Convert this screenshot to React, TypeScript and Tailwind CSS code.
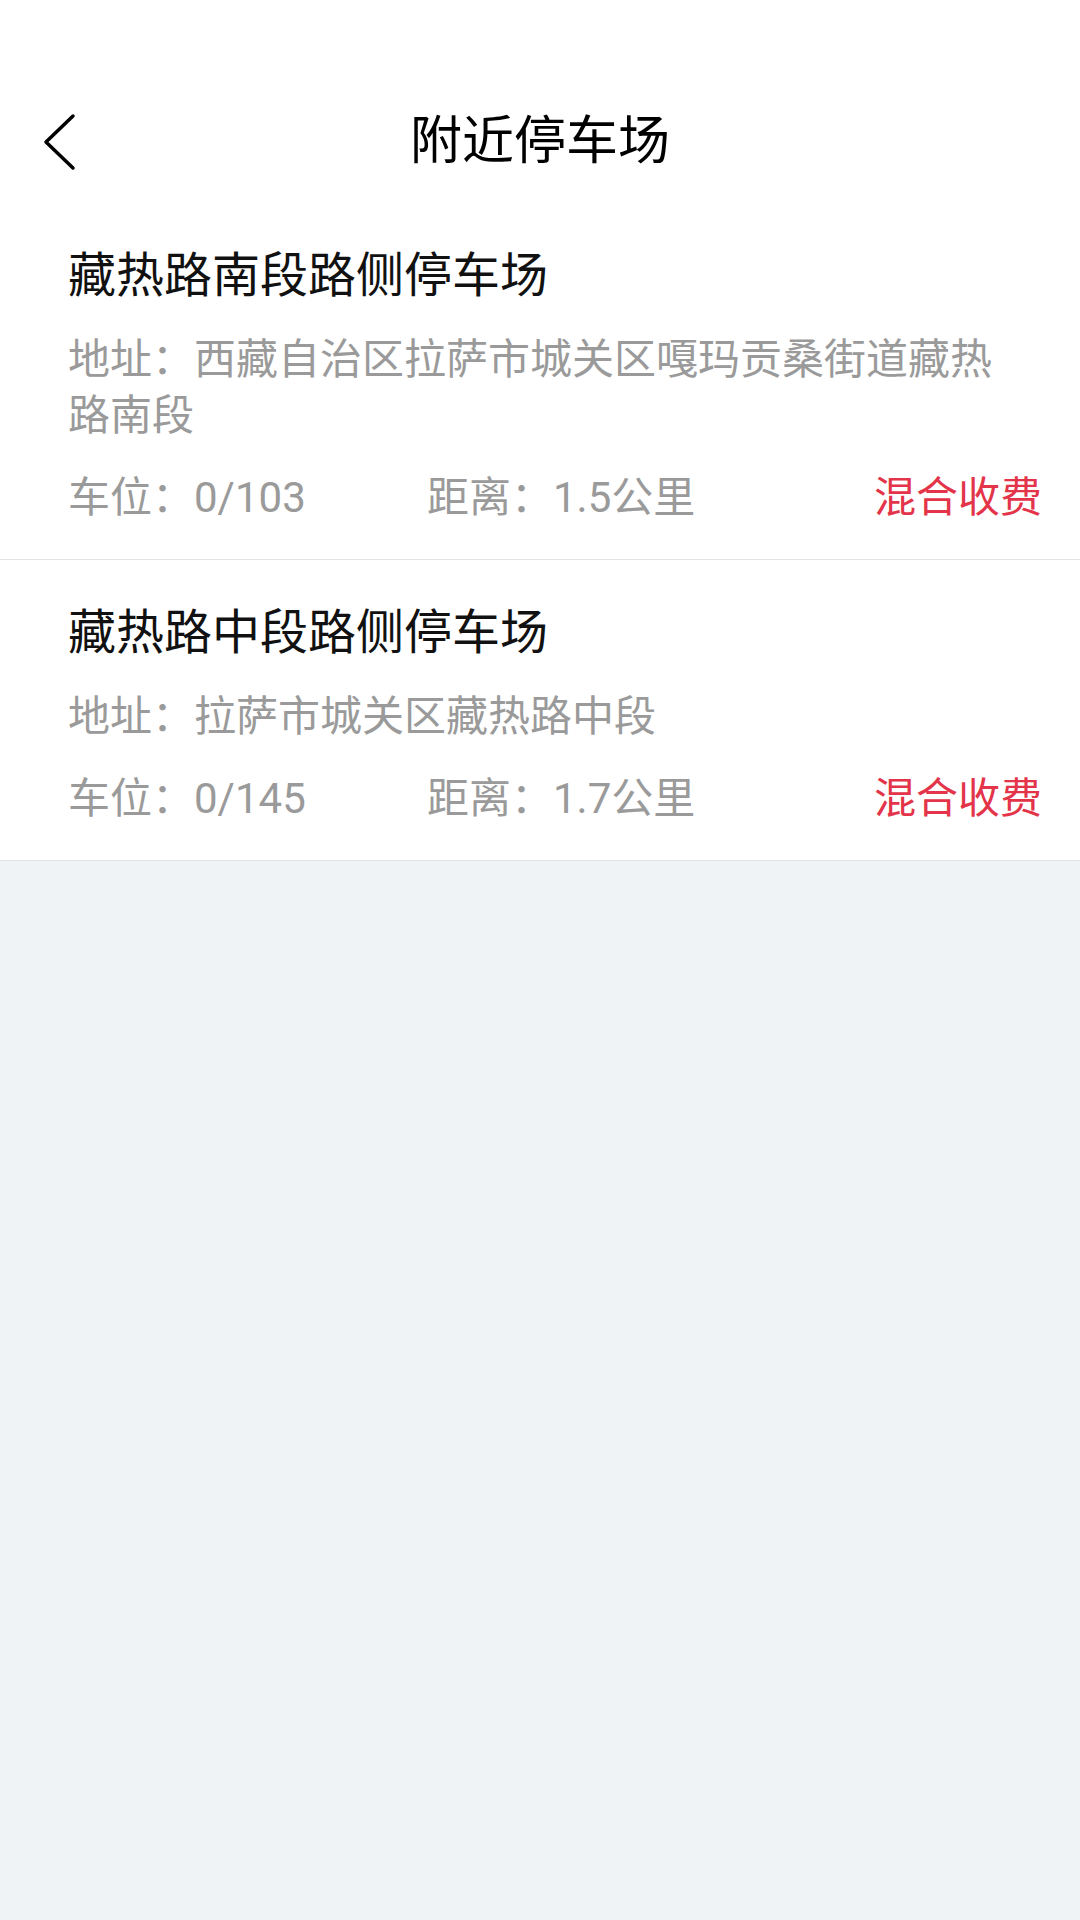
import React from 'react'

type Lot = {
  name: string
  address: string
  spaces: string
  distance: string
  fee: string
}

const lots: Lot[] = [
  {
    name: '藏热路南段路侧停车场',
    address: '地址：西藏自治区拉萨市城关区嘎玛贡桑街道藏热路南段',
    spaces: '车位：0/103',
    distance: '距离：1.5公里',
    fee: '混合收费',
  },
  {
    name: '藏热路中段路侧停车场',
    address: '地址：拉萨市城关区藏热路中段',
    spaces: '车位：0/145',
    distance: '距离：1.7公里',
    fee: '混合收费',
  },
]

function BackIcon() {
  return (
    <svg width="40" height="60" viewBox="0 0 40 60" fill="none">
      <path d="M33 4 L6 30 L33 56" stroke="#000" strokeWidth="3.5" strokeLinecap="round" strokeLinejoin="round" />
    </svg>
  )
}

function LotItem({ lot }: { lot: Lot }) {
  return (
    <div className="bg-white border-b border-[#e3e3e3] pl-[68px] pr-[38px] pt-[43px] pb-[33px]">
      <div className="text-[48px] leading-[60px] text-[#111]">{lot.name}</div>
      <div className="mt-[26px] mr-[30px] text-[42px] leading-[56px] text-[#9a9a9a]">{lot.address}</div>
      <div className="mt-[26px] flex items-center text-[42px] leading-[56px]">
        <span className="w-[359px] text-[#9a9a9a]">{lot.spaces}</span>
        <span className="flex-1 text-[#9a9a9a]">{lot.distance}</span>
        <span className="text-[#e3344a]">{lot.fee}</span>
      </div>
    </div>
  )
}

export default function App() {
  return (
    <div
      className="min-h-[1920px] w-[1080px] bg-[#eff3f6]"
      style={{ fontFamily: 'Roboto, "Noto Sans CJK SC", sans-serif' }}
    >
      <div className="bg-white h-[203px] pt-[81px]">
        <div className="relative flex h-[122px] items-center justify-center">
          <div className="absolute left-[40px] top-0 flex h-full items-center">
            <BackIcon />
          </div>
          <h1 className="text-[52px] leading-[60px] text-black font-normal">附近停车场</h1>
        </div>
      </div>
      {lots.map((lot) => (
        <LotItem key={lot.name} lot={lot} />
      ))}
    </div>
  )
}
